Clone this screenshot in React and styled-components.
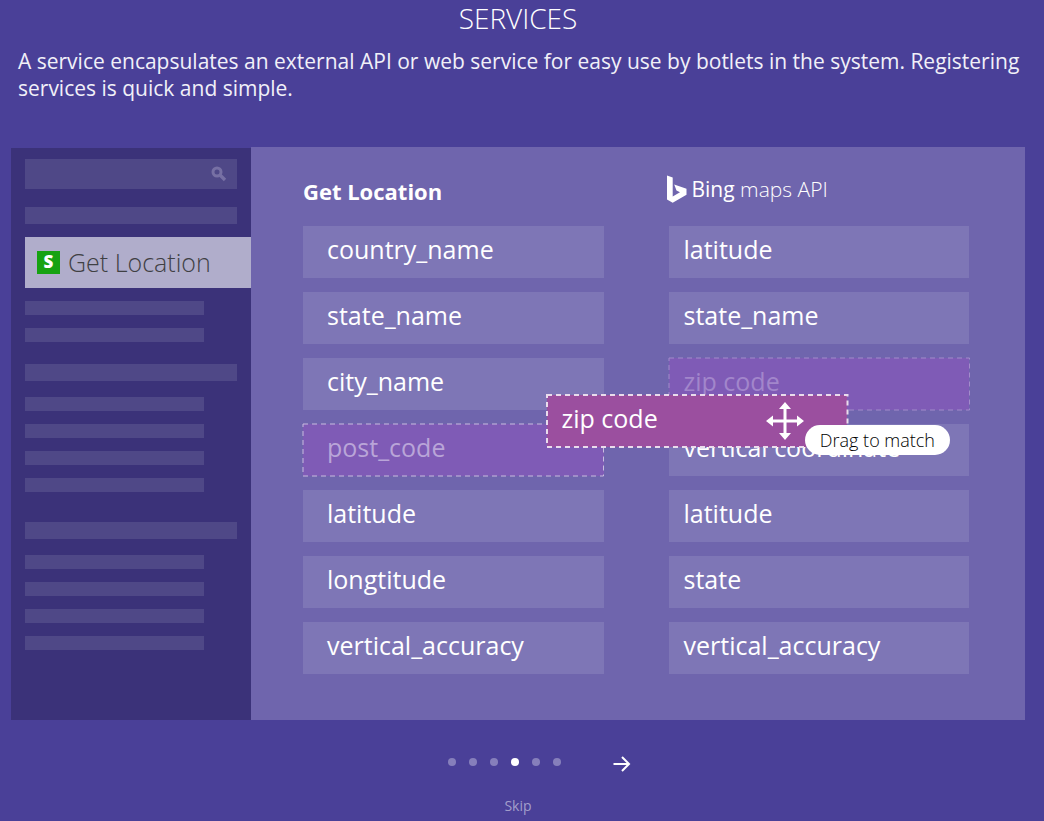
import React from "react";
import styled, { createGlobalStyle, css } from "styled-components";

const GlobalStyle = createGlobalStyle`
  *, *::before, *::after { box-sizing: border-box; }
  body {
    margin: 0;
    background: #4a4098;
    color: #fff;
    font-family: "Open Sans", "Noto Sans", sans-serif;
  }
  button, input { font: inherit; color: inherit; }
`;

const Page = styled.main`
  min-height: 100vh;
  padding: 0 19px 0 11px;
`;

const Title = styled.h1`
  margin: 0;
  height: 38px;
  font-size: 28px;
  font-weight: 300;
  line-height: 36px;
  text-align: center;
`;

const Description = styled.p`
  margin: 10px 0 45px;
  padding-left: 7px;
  font-size: 21px;
  line-height: 27px;
  color: #f1f0f8;
`;

const Panel = styled.section`
  display: grid;
  grid-template-columns: 240px 1fr;
  min-height: 573px;
`;

const Sidebar = styled.aside`
  display: flex;
  flex-direction: column;
  margin-top: 1px;
  padding: 11px 0 68px 14px;
  background: #3b3279;
`;

const Search = styled.label`
  display: flex;
  align-items: center;
  height: 30px;
  margin-right: 14px;
  padding-right: 10px;
  background: #4f4887;
`;

const SearchInput = styled.input`
  flex: 1;
  min-width: 0;
  height: 100%;
  padding: 0 10px;
  border: 0;
  outline: 0;
  background: transparent;
  font-size: 15px;
`;

const Group = styled.div`
  display: flex;
  flex-direction: column;
  gap: 13px;
  margin-top: ${(p) => p.$space}px;
`;

const Heading = styled.div`
  height: 17px;
  margin-right: 14px;
  margin-bottom: ${(p) => (p.$spaced ? 3 : 0)}px;
  background: #4f4887;
`;

const Line = styled.div`
  height: 14px;
  margin-right: 47px;
  background: #4f4887;
`;

const Selected = styled.button`
  display: flex;
  align-items: center;
  gap: 8px;
  height: 51px;
  padding: 0 0 0 12px;
  border: 0;
  background: #b0adcb;
  color: #3f4043;
  font-size: 25px;
  font-weight: 300;
  line-height: 32px;
  white-space: nowrap;
`;

const SelectedLabel = styled.span`
  padding-bottom: 2px;
`;

const Badge = styled.span`
  width: 23px;
  height: 23px;
  background: #16a212;
  color: #fff;
  font-size: 17px;
  font-weight: 800;
  line-height: 22px;
  text-align: center;
`;

const Content = styled.div`
  display: grid;
  grid-template-columns: 1fr 1fr;
  gap: 65px;
  padding: 24px 56px 45px 52px;
  background: #6f65ad;
`;

const ColumnTitle = styled.h2`
  display: flex;
  align-items: center;
  gap: 5px;
  height: 36px;
  margin: 0 0 19px ${(p) => (p.$brand ? "-2px" : "0")};
  padding-top: ${(p) => (p.$brand ? 0 : 4)}px;
  font-size: ${(p) => (p.$brand ? 21 : 22)}px;
  font-weight: ${(p) => (p.$brand ? 300 : 700)};
  line-height: 28px;
  white-space: nowrap;
`;

const Strong = styled.span`
  font-weight: 400;
`;

const Fields = styled.ul`
  display: flex;
  flex-direction: column;
  gap: 14px;
  margin: 0;
  padding: 0;
  list-style: none;
`;

const tile = css`
  height: 52px;
  font-size: 25px;
  line-height: 46px;
  white-space: nowrap;
`;

const Field = styled.li`
  ${tile}
  position: relative;
  padding-left: ${(p) => p.$indent}px;
  background: #7e76b6;
  ${(p) =>
    p.$slot &&
    css`
      background: #7f5bb6;
      color: ${p.$slot};
    `}
`;

const Outline = styled.svg`
  position: absolute;
  inset: 0;
  width: 100%;
  height: 100%;
  overflow: visible;
  fill: none;
  stroke: ${(p) => p.$color};
  stroke-width: ${(p) => p.$weight || 1};
  stroke-dasharray: 5 4;
`;

const DragCard = styled.div`
  ${tile}
  position: absolute;
  z-index: 1;
  top: 37px;
  left: -122px;
  width: 100%;
  padding-left: 15px;
  background: #9b4f9f;
  color: #fff;
`;

const MoveIcon = styled.svg`
  position: absolute;
  top: 7px;
  right: 43px;
`;

const Tooltip = styled.span`
  position: absolute;
  top: 30px;
  right: -103px;
  height: 30px;
  padding: 0 15px;
  border-radius: 15px;
  background: #fff;
  color: #000;
  font-size: 18px;
  font-weight: 300;
  line-height: 30px;
`;

const Pager = styled.nav`
  display: flex;
  justify-content: center;
  align-items: center;
  gap: 49px;
  height: 26px;
  margin-top: 30px;
  padding-left: 45px;
`;

const Dots = styled.div`
  display: flex;
  gap: 13px;
  margin-top: -2px;
`;

const Dot = styled.button`
  width: 8px;
  height: 8px;
  padding: 0;
  border: 0;
  border-radius: 50%;
  background: ${(p) => (p.$active ? "#fff" : "#867fbb")};
`;

const Next = styled.button`
  display: flex;
  margin-top: 2px;
  padding: 0 3px;
  border: 0;
  background: transparent;
`;

const Skip = styled.a`
  display: block;
  width: max-content;
  margin: 20px auto 0;
  color: #a39ecb;
  font-size: 14px;
  line-height: 20px;
  text-decoration: none;
`;

const source = ["country_name", "state_name", "city_name", "post_code", "latitude", "longtitude", "vertical_accuracy"];
const target = ["latitude", "state_name", "zip code", "vertical coordinate", "latitude", "state", "vertical_accuracy"];

function Dashes({ color, weight }) {
  return (
    <Outline $color={color} $weight={weight} aria-hidden="true">
      <rect x="0" y="0" width="100%" height="100%" />
    </Outline>
  );
}

function Lines({ count }) {
  return Array.from({ length: count }, (_, i) => <Line key={i} />);
}

export default function App() {
  return (
    <>
      <GlobalStyle />
      <Page>
        <Title>SERVICES</Title>
        <Description>
          A service encapsulates an external API or web service for easy use by botlets in the system. Registering
          services is quick and simple.
        </Description>
        <Panel>
          <Sidebar>
            <Search>
              <SearchInput type="text" aria-label="Search services" />
              <svg width="16" height="16" viewBox="0 0 16 16" fill="none" stroke="#7770a4" aria-hidden="true">
                <circle cx="6" cy="6" r="4" strokeWidth="3" />
                <path d="M8.5 8.5 L14 14" strokeWidth="3.4" />
              </svg>
            </Search>
            <Group $space={18}>
              <Heading />
              <Selected type="button">
                <Badge>S</Badge>
                <SelectedLabel>Get Location</SelectedLabel>
              </Selected>
              <Lines count={2} />
            </Group>
            <Group $space={22}>
              <Heading $spaced />
              <Lines count={4} />
            </Group>
            <Group $space={30}>
              <Heading $spaced />
              <Lines count={4} />
            </Group>
          </Sidebar>
          <Content>
            <div>
              <ColumnTitle>Get Location</ColumnTitle>
              <Fields>
                {source.map((name) => (
                  <Field key={name} $indent={24} $slot={name === "post_code" && "#b9a5d8"}>
                    {name}
                    {name === "post_code" && <Dashes color="#c9bcdf" />}
                  </Field>
                ))}
              </Fields>
            </div>
            <div>
              <ColumnTitle $brand>
                <svg width="20" height="28" viewBox="0 0 20 28" aria-hidden="true">
                  <path fill="#fff" d="M0 0.5 L5.7 2.5 V21.5 L13 17.3 L9.5 15.6 L7.2 9.5 L19.5 13.7 V19.8 L5.7 27.8 L0 24.6 Z" />
                </svg>
                <span>
                  <Strong>Bing</Strong> maps API
                </span>
              </ColumnTitle>
              <Fields>
                {target.map((name, i) => (
                  <Field key={i} $indent={15} $slot={name === "zip code" && "#a286cb"}>
                    {name}
                    {name === "zip code" && (
                      <>
                        <Dashes color="#a38ccb" />
                        <DragCard>
                          zip code
                          <Dashes color="#eadcec" weight={2} />
                          <MoveIcon width="38" height="38" viewBox="0 0 38 38" aria-hidden="true">
                            <path
                              fill="#fff"
                              d="M19 0 L25 7 H20.5 V17.5 H31 V13.5 L38 19 L31 24.5 V20.5 H20.5 V31 H25 L19 38 L13 31 H17.5 V20.5 H7 V24.5 L0 19 L7 13.5 V17.5 H17.5 V7 H13 Z"
                            />
                          </MoveIcon>
                          <Tooltip role="tooltip">Drag to match</Tooltip>
                        </DragCard>
                      </>
                    )}
                  </Field>
                ))}
              </Fields>
            </div>
          </Content>
        </Panel>
        <Pager aria-label="Tour steps">
          <Dots>
            {[1, 2, 3, 4, 5, 6].map((n) => (
              <Dot key={n} type="button" $active={n === 4} aria-label={`Step ${n}`} />
            ))}
          </Dots>
          <Next type="button" aria-label="Next">
            <svg width="18" height="16" viewBox="0 0 18 16" fill="none" stroke="#fff" strokeWidth="2" aria-hidden="true">
              <path d="M0.5 8 H16 M9 1 L16 8 L9 15" />
            </svg>
          </Next>
        </Pager>
        <Skip href="#skip">Skip</Skip>
      </Page>
    </>
  );
}
